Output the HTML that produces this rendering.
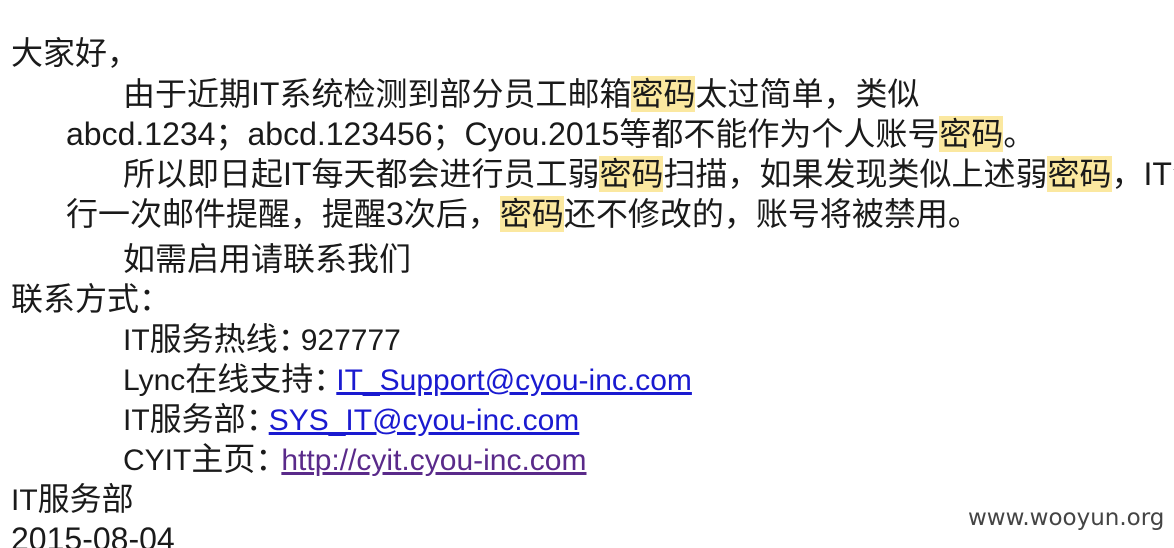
<!DOCTYPE html>
<html><head><meta charset="utf-8"><style>
html,body{margin:0;padding:0;background:#fff;width:1174px;height:548px;overflow:hidden;position:relative}
.l{position:absolute;white-space:nowrap;font-family:"Liberation Sans","Noto Sans CJK SC",sans-serif;font-size:32px;line-height:40px;color:#1a1a1a;letter-spacing:0}
.e{font-size:30px}
.c{letter-spacing:-9px}
.h{background:#fbe8a0}
a{color:#1a1ad0;text-decoration:underline;font-size:30px}
a.v{color:#5a2a8a}
.w{position:absolute;left:968px;top:504px;font-family:"DejaVu Sans",sans-serif;font-size:23px;color:#444;line-height:28px}
</style></head><body>
<div class="l" style="left:11px;top:33px">大家好，</div>
<div class="l" style="left:123px;top:74px">由于近期IT系统检测到部分员工邮箱<span class="h">密码</span>太过简单，类似</div>
<div class="l" style="left:66px;top:114px">abcd.1234；abcd.123456；Cyou.2015等都不能作为个人账号<span class="h">密码</span>。</div>
<div class="l" style="left:123px;top:154px">所以即日起IT每天都会进行员工弱<span class="h">密码</span>扫描，如果发现类似上述弱<span class="h">密码</span>，IT会</div>
<div class="l" style="left:66px;top:194px">行一次邮件提醒，提醒3次后，<span class="h">密码</span>还不修改的，账号将被禁用。</div>
<div class="l" style="left:123px;top:239px">如需启用请联系我们</div>
<div class="l" style="left:11px;top:279px">联系方式：</div>
<div class="l" style="left:123px;top:319px"><span class="e">IT</span>服务热线<span class="c">：</span><span class="e">927777</span></div>
<div class="l" style="left:123px;top:359px"><span class="e">Lync</span>在线支持<span class="c">：</span><a>IT_Support@cyou-inc.com</a></div>
<div class="l" style="left:123px;top:399px"><span class="e">IT</span>服务部<span class="c">：</span><a>SYS_IT@cyou-inc.com</a></div>
<div class="l" style="left:123px;top:439px"><span class="e">CYIT</span>主页<span class="c" style="letter-spacing:-6px">：</span><a class="v">http://cyit.cyou-inc.com</a></div>
<div class="l" style="left:11px;top:479px"><span class="e">IT</span>服务部</div>
<div class="l" style="left:11px;top:519px">2015-08-04</div>
<div class="w">www.wooyun.org</div>
</body></html>
